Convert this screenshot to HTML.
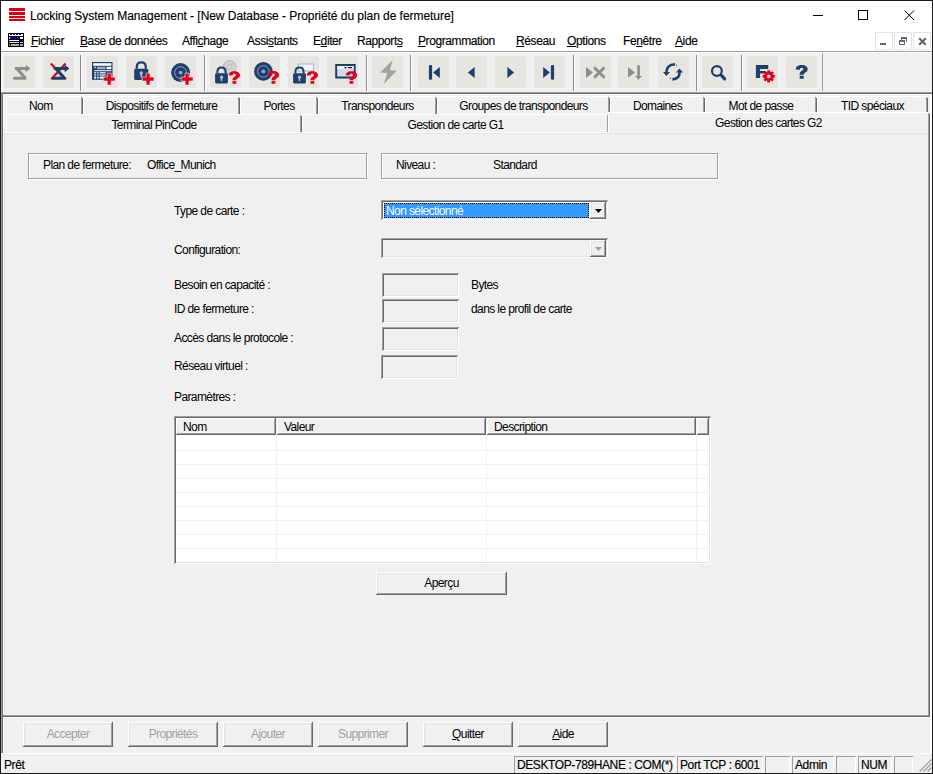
<!DOCTYPE html>
<html><head><meta charset="utf-8">
<style>
*{margin:0;padding:0;box-sizing:border-box}
html,body{width:933px;height:774px;overflow:hidden;background:#f0f0f0}
body{position:relative;font-family:"Liberation Sans",sans-serif;color:#000}
.a{position:absolute}
.t{position:absolute;font-size:12px;line-height:13px;letter-spacing:-0.6px;white-space:pre;color:#000}
.s{position:absolute;font-size:12px;line-height:15px;letter-spacing:-0.4px;white-space:pre;color:#000;-webkit-text-stroke:0.15px #000}
.u{text-decoration:underline;text-underline-offset:1px}
.sunk{box-shadow:inset 1px 1px #a0a0a0,inset -1px -1px #fff,inset 2px 2px #696969,inset -2px -2px #e3e3e3}
.rais{box-shadow:inset -1px -1px #696969,inset 1px 1px #fff,inset -2px -2px #a0a0a0,inset 2px 2px #e3e3e3}
.tb{position:absolute;top:56px;width:31px;height:32px;background:#e6e5e0;border-radius:2px}
.tb svg{position:absolute;left:0;top:0}
.sep{position:absolute;top:55px;width:1px;height:36px;background:#8a8a8a;box-shadow:1px 0 #fff}
.tab{position:absolute;height:18px;border-left:1px solid #fff;border-top:1px solid #fff;box-shadow:inset -1px 0 #a0a0a0;}
.tab:after{content:"";position:absolute;right:-1px;top:0;bottom:0;width:1px;background:#696969}
.etch{position:absolute;border:1px solid #a0a0a0;box-shadow:1px 1px #fff,inset 1px 1px #fff}
.btn{position:absolute;width:90px;height:24px;background:#f0f0f0}
.dis{color:#a0a0a0}
.pane{position:absolute;top:756px;height:17px;border-left:1px solid #a0a0a0;border-top:1px solid #a0a0a0}
</style></head>
<body>
<!-- window frame -->
<div class="a" style="left:0;top:0;width:933px;height:774px;border:1px solid #1a1a1a;"></div>
<!-- title bar -->
<div class="a" style="left:1px;top:1px;width:931px;height:50px;background:#fff"></div>
<div class="a" style="left:9px;top:8px;width:16px;height:3px;background:#e0000f"></div>
<div class="a" style="left:9px;top:12px;width:16px;height:3px;background:#e0000f"></div>
<div class="a" style="left:9px;top:16px;width:16px;height:2px;background:#e0000f"></div>
<div class="a" style="left:9px;top:19px;width:16px;height:2px;background:#e0000f"></div>
<div class="s" style="left:30px;top:9px;letter-spacing:-0.05px">Locking System Management - [New Database - Propriété du plan de fermeture]</div>
<div class="a" style="left:813px;top:15px;width:10px;height:1px;background:#000"></div>
<div class="a" style="left:858px;top:10px;width:10px;height:10px;border:1px solid #000"></div>
<svg class="a" style="left:903px;top:9px" width="13" height="13"><path d="M1.5 1.5L11 11M11 1.5L1.5 11" stroke="#000" stroke-width="1"/></svg>
<!-- menu -->
<svg class="a" style="left:8px;top:33px" width="16" height="14" viewBox="0 0 16 14"><rect width="16" height="14" fill="#000"/><rect x="1" y="1" width="14" height="2" fill="#fff"/><path d="M2 1h2v1h-2zM5 1h2v1h-2zM8 1h2v1h-2zM11 1h2v1h-2z" fill="#0000e0"/><rect x="1.2" y="4" width="1" height="2" fill="#fff"/><rect x="3" y="4" width="8" height="2" fill="#0000b0"/><rect x="12" y="4" width="3" height="2" fill="#fff"/><rect x="1.2" y="7" width="9.8" height="1" fill="#fff"/><rect x="12" y="7" width="3" height="1" fill="#000090"/><rect x="1.2" y="9" width="9.8" height="1" fill="#ddd"/><rect x="12" y="9" width="3" height="1" fill="#ddd"/><rect x="1.2" y="11" width="1" height="2" fill="#aaa"/><rect x="3" y="11" width="8" height="2" fill="#aaa"/><rect x="12" y="11" width="3" height="2" fill="#aaa"/></svg>
<div class="s" style="left:31px;top:34px"><span class="u">F</span>ichier</div>
<div class="s" style="left:80px;top:34px"><span class="u">B</span>ase de données</div>
<div class="s" style="left:182px;top:34px">Affi<span class="u">c</span>hage</div>
<div class="s" style="left:247px;top:34px">Assi<span class="u">s</span>tants</div>
<div class="s" style="left:313px;top:34px">E<span class="u">d</span>iter</div>
<div class="s" style="left:357px;top:34px">Rapport<span class="u">s</span></div>
<div class="s" style="left:418px;top:34px"><span class="u">P</span>rogrammation</div>
<div class="s" style="left:516px;top:34px"><span class="u">R</span>éseau</div>
<div class="s" style="left:567px;top:34px"><span class="u">O</span>ptions</div>
<div class="s" style="left:623px;top:34px">Fe<span class="u">n</span>être</div>
<div class="s" style="left:675px;top:34px"><span class="u">A</span>ide</div>
<div class="a" style="left:875px;top:32px;width:18px;height:18px;border:1px solid #e3e3e3"></div>
<div class="a" style="left:894px;top:32px;width:18px;height:18px;border:1px solid #e3e3e3"></div>
<div class="a" style="left:913px;top:32px;width:18px;height:18px;border:1px solid #e3e3e3"></div>
<div class="a" style="left:880px;top:43px;width:6px;height:2px;background:#5a6570"></div><svg class="a" style="left:899px;top:37px" width="8" height="8" fill="#5d6975"><rect x="2" y="0" width="6" height="2"/><rect x="7" y="2" width="1" height="3"/><rect x="2" y="2" width="1" height="1"/><rect x="0" y="3" width="6" height="2"/><rect x="0" y="5" width="1" height="3"/><rect x="5" y="5" width="1" height="3"/><rect x="0" y="7" width="6" height="1"/></svg><svg class="a" style="left:918px;top:37px" width="9" height="9"><path d="M1.2 1.2L7.8 7.8M7.8 1.2L1.2 7.8" stroke="#5a6570" stroke-width="2"/></svg>
<div class="a" style="left:1px;top:51px;width:931px;height:1px;background:#a0a0a0"></div>
<!-- toolbar -->
<div class="a" style="left:1px;top:52px;width:931px;height:40px;background:#f0f0f0;box-shadow:inset 1px 1px #fff"></div>
<div class="a" style="left:822px;top:53px;width:1px;height:38px;background:#a0a0a0"></div>
<div id="toolbar">
<div class="tb" style="left:4px"><svg width="31" height="32" viewBox="0 0 31 32"><path d="M12 12.4H23 M12.8 12.6L20.8 21.6 M10.4 22.3H21" fill="none" stroke="#8d8d8d" stroke-width="3" stroke-linecap="round" stroke-linejoin="round"/><path d="M21.6 8.8L26.4 12.4L21.6 16.2Z" fill="#8d8d8d"/></svg></div>
<div class="tb" style="left:43px"><svg width="31" height="32" viewBox="0 0 31 32"><path d="M7.8 7.4L23 23.2M22.6 7.4L8.2 23.2" stroke="#e2001a" stroke-width="2.2"/><path d="M12 12.4H23 M12.8 12.6L20.8 21.6 M10.4 22.3H21" fill="none" stroke="#1d3f6b" stroke-width="3" stroke-linecap="round" stroke-linejoin="round"/><path d="M21.6 8.8L26.4 12.4L21.6 16.2Z" fill="#1d3f6b"/></svg></div>
<div class="tb" style="left:87px"><svg width="31" height="32" viewBox="0 0 31 32"><rect x="5" y="6" width="20.5" height="17.8" fill="#1d3f6b"/><rect x="6.2" y="7.2" width="18.2" height="2.6" fill="#fff"/><rect x="7.2" y="10.8" width="1.8" height="1" fill="#fff"/><rect x="10" y="10.8" width="8.6" height="2.4" fill="#a5a9c8"/><rect x="19.6" y="10.8" width="4.8" height="2.4" fill="#fff"/><rect x="7.2" y="14.2" width="17.2" height="1" fill="#fff"/><rect x="7.2" y="16.2" width="2" height="1.2" fill="#fff"/><rect x="10.2" y="16.2" width="1.4" height="1.2" fill="#fff"/><rect x="12.6" y="16.2" width="6" height="1.2" fill="#fff"/><rect x="7.2" y="18.4" width="2" height="1.2" fill="#fff"/><rect x="10.2" y="18.4" width="1.4" height="1.2" fill="#fff"/><rect x="12.6" y="18.4" width="6" height="1.2" fill="#fff"/><rect x="7.2" y="20.6" width="2" height="2" fill="#fff"/><rect x="10.2" y="20.6" width="1.4" height="2" fill="#fff"/><rect x="12.6" y="20.6" width="5" height="2" fill="#fff"/><path d="M20.2 17.1h4v4.0h4.0v4h-4.0v4.0h-4v-4.0h-4.0v-4h4.0z" fill="#e2001a" stroke="#fff" stroke-width="0.6" stroke-linejoin="round"/></svg></div>
<div class="tb" style="left:126px"><svg width="31" height="32" viewBox="0 0 31 32"><g transform="translate(8.2,5.2) scale(1.07)"><path d="M2.4 7V5.4C2.4 2.6 4.3 1.1 6.6 1.1C8.9 1.1 10.8 2.6 10.8 5.4V7" fill="none" stroke="#1d3f6b" stroke-width="2.1"/><rect x="0" y="7" width="13.2" height="10.5" rx="1.2" fill="#1d3f6b"/><circle cx="6.6" cy="11" r="1.7" fill="#b7b4cc"/><rect x="5.8" y="11.5" width="1.6" height="3.5" fill="#b7b4cc"/></g><path d="M20.1 17.1h4v4.0h4.0v4h-4.0v4.0h-4v-4.0h-4.0v-4h4.0z" fill="#e2001a" stroke="#fff" stroke-width="0.6" stroke-linejoin="round"/></svg></div>
<div class="tb" style="left:165px"><svg width="31" height="32" viewBox="0 0 31 32"><circle cx="15.6" cy="16.6" r="9.5" fill="#1d3f6b"/><circle cx="15.6" cy="16.6" r="5.89" fill="none" stroke="#8ea3c4" stroke-width="1"/><circle cx="15.6" cy="16.6" r="1.90" fill="#9aa6c8"/><path d="M20.1 17.1h4v4.0h4.0v4h-4.0v4.0h-4v-4.0h-4.0v-4h4.0z" fill="#e2001a" stroke="#fff" stroke-width="0.6" stroke-linejoin="round"/></svg></div>
<div class="tb" style="left:210px"><svg width="31" height="32" viewBox="0 0 31 32"><circle cx="19.6" cy="11" r="7.2" fill="#c6c6c6"/><circle cx="19.6" cy="11" r="4.4" fill="none" stroke="#e4e4e4" stroke-width="1"/><circle cx="19.6" cy="11" r="1.4" fill="#e0e0e0"/><g transform="translate(5.1,10.5) scale(0.97)"><path d="M2.4 7V5.4C2.4 2.6 4.3 1.1 6.6 1.1C8.9 1.1 10.8 2.6 10.8 5.4V7" fill="none" stroke="#1d3f6b" stroke-width="2.1"/><rect x="0" y="7" width="13.2" height="10.5" rx="1.2" fill="#1d3f6b"/><circle cx="6.6" cy="11" r="1.7" fill="#b7b4cc"/><rect x="5.8" y="11.5" width="1.6" height="3.5" fill="#b7b4cc"/></g><g transform="translate(18.2,15.2) scale(0.938,0.900)" fill="#e2001a"><path d="M0.6 4.6C0.6 1.6 3.2 0 6.6 0C10.3 0 12.6 1.9 12.6 4.4C12.6 7.3 9 7.8 8.6 9.6L8.6 10H4.6V9.3C4.6 6.3 8.2 5.8 8.2 4.4C8.2 3.5 7.5 2.9 6.5 2.9C5.4 2.9 4.8 3.6 4.8 4.9Z"/><rect x="4.6" y="11" width="4" height="3"/></g></svg></div>
<div class="tb" style="left:249px"><svg width="31" height="32" viewBox="0 0 31 32"><circle cx="14.4" cy="15.4" r="9.3" fill="#1d3f6b"/><circle cx="14.4" cy="15.4" r="5.77" fill="none" stroke="#8ea3c4" stroke-width="1"/><circle cx="14.4" cy="15.4" r="1.86" fill="#9aa6c8"/><g transform="translate(18.2,15.0) scale(0.946,0.914)" fill="#e2001a"><path d="M0.6 4.6C0.6 1.6 3.2 0 6.6 0C10.3 0 12.6 1.9 12.6 4.4C12.6 7.3 9 7.8 8.6 9.6L8.6 10H4.6V9.3C4.6 6.3 8.2 5.8 8.2 4.4C8.2 3.5 7.5 2.9 6.5 2.9C5.4 2.9 4.8 3.6 4.8 4.9Z"/><rect x="4.6" y="11" width="4" height="3"/></g></svg></div>
<div class="tb" style="left:288px"><svg width="31" height="32" viewBox="0 0 31 32"><rect x="10.2" y="8" width="15.4" height="7" fill="#f4f4f8" stroke="#9aa6c8" stroke-width="0.8"/><g transform="translate(5.1,10.5) scale(0.97)"><path d="M2.4 7V5.4C2.4 2.6 4.3 1.1 6.6 1.1C8.9 1.1 10.8 2.6 10.8 5.4V7" fill="none" stroke="#1d3f6b" stroke-width="2.1"/><rect x="0" y="7" width="13.2" height="10.5" rx="1.2" fill="#1d3f6b"/><circle cx="6.6" cy="11" r="1.7" fill="#b7b4cc"/><rect x="5.8" y="11.5" width="1.6" height="3.5" fill="#b7b4cc"/></g><g transform="translate(18.2,15.2) scale(0.938,0.900)" fill="#e2001a"><path d="M0.6 4.6C0.6 1.6 3.2 0 6.6 0C10.3 0 12.6 1.9 12.6 4.4C12.6 7.3 9 7.8 8.6 9.6L8.6 10H4.6V9.3C4.6 6.3 8.2 5.8 8.2 4.4C8.2 3.5 7.5 2.9 6.5 2.9C5.4 2.9 4.8 3.6 4.8 4.9Z"/><rect x="4.6" y="11" width="4" height="3"/></g></svg></div>
<div class="tb" style="left:327px"><svg width="31" height="32" viewBox="0 0 31 32"><rect x="9.2" y="9" width="18.5" height="12.5" fill="#d6dbe8" stroke="#1d3f6b" stroke-width="2"/><rect x="10.2" y="10" width="16.5" height="3" fill="#f4f5fa"/><rect x="17.5" y="11" width="2" height="1.2" fill="#000"/><rect x="21" y="11" width="4" height="1.2" fill="#000"/><g transform="translate(18.2,15.2) scale(0.946,0.900)" fill="#e2001a"><path d="M0.6 4.6C0.6 1.6 3.2 0 6.6 0C10.3 0 12.6 1.9 12.6 4.4C12.6 7.3 9 7.8 8.6 9.6L8.6 10H4.6V9.3C4.6 6.3 8.2 5.8 8.2 4.4C8.2 3.5 7.5 2.9 6.5 2.9C5.4 2.9 4.8 3.6 4.8 4.9Z"/><rect x="4.6" y="11" width="4" height="3"/></g></svg></div>
<div class="tb" style="left:372px"><svg width="31" height="32" viewBox="0 0 31 32"><path d="M20.7 4L8.2 16.6L15.2 17L11.9 27.8L24.9 14.7L17.9 14.3Z" fill="#a2a2a2"/></svg></div>
<div class="tb" style="left:418px"><svg width="31" height="32" viewBox="0 0 31 32"><rect x="10.9" y="8.9" width="3.2" height="14.9" rx="1.2" fill="#1d3f6b"/><path d="M15.1 16.4L21.8 11V21.9Z" fill="#1d3f6b"/></svg></div>
<div class="tb" style="left:456px"><svg width="31" height="32" viewBox="0 0 31 32"><path d="M11.9 16.4L18.6 11V22Z" fill="#1d3f6b"/></svg></div>
<div class="tb" style="left:495px"><svg width="31" height="32" viewBox="0 0 31 32"><path d="M19.1 16.4L12.4 11V22Z" fill="#1d3f6b"/></svg></div>
<div class="tb" style="left:534px"><svg width="31" height="32" viewBox="0 0 31 32"><rect x="16.9" y="8.9" width="3.2" height="14.9" rx="1.2" fill="#1d3f6b"/><path d="M15.9 16.4L9.2 11V21.9Z" fill="#1d3f6b"/></svg></div>
<div class="tb" style="left:580px"><svg width="31" height="32" viewBox="0 0 31 32"><path d="M6 11V22L13 16.6Z" fill="#8d8d8d"/><path d="M15 12.2L23.6 20.8M23.6 12.2L15 20.8" stroke="#8d8d8d" stroke-width="3" stroke-linecap="round"/></svg></div>
<div class="tb" style="left:618px"><svg width="31" height="32" viewBox="0 0 31 32"><path d="M10 11V21.7L17 16.4Z" fill="#8d8d8d"/><rect x="19.3" y="9.2" width="2.6" height="11.5" fill="#8d8d8d"/><path d="M17 19.9H24L20.5 23.8Z" fill="#8d8d8d"/></svg></div>
<div class="tb" style="left:658px"><svg width="31" height="32" viewBox="0 0 31 32"><path d="M17 8.2C12 8.4 8.6 11 8.4 16" fill="none" stroke="#1d3f6b" stroke-width="2.6"/><path d="M5 16H12L8.4 20Z" fill="#1d3f6b"/><path d="M14.4 23.4C19 23.2 21.6 20.6 21.6 16" fill="none" stroke="#1d3f6b" stroke-width="2.6"/><path d="M18 16.6H25.2L21.4 12.6Z" fill="#1d3f6b"/><circle cx="18.6" cy="9.2" r="0.6" fill="#1d3f6b"/><circle cx="12.4" cy="22.2" r="0.6" fill="#1d3f6b"/></svg></div>
<div class="tb" style="left:702px"><svg width="31" height="32" viewBox="0 0 31 32"><circle cx="14.9" cy="15" r="4.9" fill="none" stroke="#1d3f6b" stroke-width="2.2"/><path d="M19.6 19.6L22.6 22.8" stroke="#1d3f6b" stroke-width="3.2" stroke-linecap="round"/></svg></div>
<div class="tb" style="left:747px"><svg width="31" height="32" viewBox="0 0 31 32"><path d="M8.9 8.9H21.2V12.9H13.1V14.9H18.6V17.6H13.1V22H8.9Z" fill="#1d3f6b"/><path d="M27.78 19.07 L27.78 21.53 L25.79 21.93 L25.74 22.04 L26.87 23.73 L25.13 25.47 L23.44 24.34 L23.33 24.39 L22.93 26.38 L20.47 26.38 L20.07 24.39 L19.96 24.34 L18.27 25.47 L16.53 23.73 L17.66 22.04 L17.61 21.93 L15.62 21.53 L15.62 19.07 L17.61 18.67 L17.66 18.56 L16.53 16.87 L18.27 15.13 L19.96 16.26 L20.07 16.21 L20.47 14.22 L22.93 14.22 L23.33 16.21 L23.44 16.26 L25.13 15.13 L26.87 16.87 L25.74 18.56 L25.79 18.67Z M23.599999999999998 20.3A1.9 1.9 0 1 0 19.8 20.3A1.9 1.9 0 1 0 23.599999999999998 20.3Z" fill="#e2001a" fill-rule="evenodd"/></svg></div>
<div class="tb" style="left:786px"><svg width="31" height="32" viewBox="0 0 31 32"><g transform="translate(9.1,8.9) scale(1.000,0.986)" fill="#1d3f6b"><path d="M0.6 4.6C0.6 1.6 3.2 0 6.6 0C10.3 0 12.6 1.9 12.6 4.4C12.6 7.3 9 7.8 8.6 9.6L8.6 10H4.6V9.3C4.6 6.3 8.2 5.8 8.2 4.4C8.2 3.5 7.5 2.9 6.5 2.9C5.4 2.9 4.8 3.6 4.8 4.9Z"/><rect x="4.6" y="11" width="4" height="3"/></g></svg></div>
<div class="sep" style="left:80px"></div>
<div class="sep" style="left:204px"></div>
<div class="sep" style="left:366px"></div>
<div class="sep" style="left:410px"></div>
<div class="sep" style="left:573px"></div>
<div class="sep" style="left:696px"></div>
<div class="sep" style="left:741px"></div>
</div>
<!-- client edge -->
<div class="a" style="left:1px;top:92px;width:931px;height:661px;box-shadow:inset 1px 1px #a0a0a0,inset 2px 2px #696969"></div>
<div class="a" style="left:3px;top:94px;width:929px;height:1px;background:#fff"></div>
<div class="a" style="left:3px;top:94px;width:1px;height:658px;background:#fff"></div>
<!-- tab page -->
<div class="a" style="left:3px;top:132px;width:927px;height:585px;border-top:1px solid #fff;box-shadow:inset -1px -1px #696969,inset -2px -2px #a0a0a0,inset 1px 0 #fff,inset 2px 1px #e3e3e3;"></div>
<div class="a" style="left:3px;top:717px;width:927px;height:1px;background:#fff"></div>
<div class="a" style="left:930px;top:94px;width:2px;height:659px;background:#fff"></div>
<div id="tabs">
<div class="a" style="left:6px;top:97px;width:1px;height:17px;background:#fff"></div>
<div class="a" style="left:7px;top:96px;width:74px;height:1px;background:#fff"></div>
<div class="a" style="left:81px;top:97px;width:1px;height:17px;background:#a0a0a0"></div>
<div class="a" style="left:82px;top:98px;width:1px;height:16px;background:#696969"></div>
<div class="t" style="left:29px;top:100px">Nom</div>
<div class="a" style="left:83px;top:97px;width:1px;height:17px;background:#fff"></div>
<div class="a" style="left:84px;top:96px;width:154px;height:1px;background:#fff"></div>
<div class="a" style="left:238px;top:97px;width:1px;height:17px;background:#a0a0a0"></div>
<div class="a" style="left:239px;top:98px;width:1px;height:16px;background:#696969"></div>
<div class="t" style="left:83px;top:100px;width:157px;text-align:center">Dispositifs de fermeture</div>
<div class="a" style="left:240px;top:97px;width:1px;height:17px;background:#fff"></div>
<div class="a" style="left:241px;top:96px;width:75px;height:1px;background:#fff"></div>
<div class="a" style="left:316px;top:97px;width:1px;height:17px;background:#a0a0a0"></div>
<div class="a" style="left:317px;top:98px;width:1px;height:16px;background:#696969"></div>
<div class="t" style="left:240px;top:100px;width:78px;text-align:center">Portes</div>
<div class="a" style="left:318px;top:97px;width:1px;height:17px;background:#fff"></div>
<div class="a" style="left:319px;top:96px;width:116px;height:1px;background:#fff"></div>
<div class="a" style="left:435px;top:97px;width:1px;height:17px;background:#a0a0a0"></div>
<div class="a" style="left:436px;top:98px;width:1px;height:16px;background:#696969"></div>
<div class="t" style="left:318px;top:100px;width:119px;text-align:center">Transpondeurs</div>
<div class="a" style="left:437px;top:97px;width:1px;height:17px;background:#fff"></div>
<div class="a" style="left:438px;top:96px;width:170px;height:1px;background:#fff"></div>
<div class="a" style="left:608px;top:97px;width:1px;height:17px;background:#a0a0a0"></div>
<div class="a" style="left:609px;top:98px;width:1px;height:16px;background:#696969"></div>
<div class="t" style="left:437px;top:100px;width:173px;text-align:center">Groupes de transpondeurs</div>
<div class="a" style="left:610px;top:97px;width:1px;height:17px;background:#fff"></div>
<div class="a" style="left:611px;top:96px;width:92px;height:1px;background:#fff"></div>
<div class="a" style="left:703px;top:97px;width:1px;height:17px;background:#a0a0a0"></div>
<div class="a" style="left:704px;top:98px;width:1px;height:16px;background:#696969"></div>
<div class="t" style="left:610px;top:100px;width:95px;text-align:center">Domaines</div>
<div class="a" style="left:705px;top:97px;width:1px;height:17px;background:#fff"></div>
<div class="a" style="left:706px;top:96px;width:109px;height:1px;background:#fff"></div>
<div class="a" style="left:815px;top:97px;width:1px;height:17px;background:#a0a0a0"></div>
<div class="a" style="left:816px;top:98px;width:1px;height:16px;background:#696969"></div>
<div class="t" style="left:705px;top:100px;width:112px;text-align:center">Mot de passe</div>
<div class="a" style="left:817px;top:97px;width:1px;height:17px;background:#fff"></div>
<div class="a" style="left:818px;top:96px;width:108px;height:1px;background:#fff"></div>
<div class="a" style="left:926px;top:97px;width:1px;height:17px;background:#a0a0a0"></div>
<div class="a" style="left:927px;top:98px;width:1px;height:16px;background:#696969"></div>
<div class="t" style="left:817px;top:100px;width:111px;text-align:center">TID spéciaux</div>
<div class="a" style="left:6px;top:115px;width:1px;height:17px;background:#fff"></div>
<div class="a" style="left:7px;top:114px;width:293px;height:1px;background:#fff"></div>
<div class="a" style="left:300px;top:115px;width:1px;height:17px;background:#a0a0a0"></div>
<div class="a" style="left:301px;top:116px;width:1px;height:16px;background:#696969"></div>
<div class="t" style="left:6px;top:119px;width:296px;text-align:center">Terminal PinCode</div>
<div class="a" style="left:302px;top:115px;width:1px;height:17px;background:#fff"></div>
<div class="a" style="left:303px;top:114px;width:304px;height:1px;background:#fff"></div>
<div class="a" style="left:607px;top:115px;width:1px;height:17px;background:#a0a0a0"></div>
<div class="a" style="left:608px;top:116px;width:1px;height:16px;background:#696969"></div>
<div class="t" style="left:302px;top:119px;width:307px;text-align:center">Gestion de carte G1</div>
<div class="a" style="left:608px;top:112px;width:322px;height:21px;background:#f0f0f0"></div>
<div class="a" style="left:608px;top:113px;width:1px;height:20px;background:#fff"></div>
<div class="a" style="left:609px;top:112px;width:318px;height:1px;background:#fff"></div>
<div class="a" style="left:928px;top:113px;width:1px;height:20px;background:#a0a0a0"></div>
<div class="a" style="left:929px;top:114px;width:1px;height:20px;background:#696969"></div>
<div class="t" style="left:607px;top:117px;width:323px;text-align:center">Gestion des cartes G2</div>
</div>
<div id="content">
<div class="etch" style="left:28px;top:153px;width:339px;height:26px"></div>
<div class="t" style="left:43px;top:159px">Plan de fermeture:</div>
<div class="t" style="left:147px;top:159px">Office_Munich</div>
<div class="etch" style="left:381px;top:153px;width:337px;height:26px"></div>
<div class="t" style="left:396px;top:159px">Niveau :</div>
<div class="t" style="left:493px;top:159px">Standard</div>
<div class="t" style="left:174px;top:205px">Type de carte :</div>
<div class="t" style="left:174px;top:244px">Configuration:</div>
<div class="t" style="left:174px;top:279px">Besoin en capacité :</div>
<div class="t" style="left:174px;top:303px">ID de fermeture :</div>
<div class="t" style="left:174px;top:332px">Accès dans le protocole :</div>
<div class="t" style="left:174px;top:360px">Réseau virtuel :</div>
<div class="t" style="left:174px;top:391px">Paramètres :</div>
<div class="t" style="left:471px;top:279px">Bytes</div>
<div class="t" style="left:471px;top:303px">dans le profil de carte</div>
<div class="a sunk" style="left:381px;top:200px;width:227px;height:20px;background:#fff"></div>
<div class="a" style="left:384px;top:203px;width:205px;height:15px;background:#3399ff;outline:1px dotted #000;outline-offset:-1px"></div>
<div class="t" style="left:386px;top:205px;color:#fff">Non sélectionné</div>
<div class="a rais" style="left:590px;top:202px;width:16px;height:17px;background:#f0f0f0"></div>
<svg class="a" style="left:594px;top:208px" width="9" height="6"><path d="M1 1H8L4.5 5Z" fill="#000"/></svg>
<div class="a sunk" style="left:381px;top:238px;width:227px;height:20px;background:#f0f0f0"></div>
<div class="a rais" style="left:590px;top:240px;width:16px;height:17px;background:#f0f0f0"></div>
<svg class="a" style="left:594px;top:246px" width="9" height="6"><path d="M1 1H8L4.5 5Z" fill="#a0a0a0"/></svg>
<div class="a sunk" style="left:382px;top:273px;width:77px;height:24px;background:#f0f0f0"></div>
<div class="a sunk" style="left:382px;top:299px;width:77px;height:24px;background:#f0f0f0"></div>
<div class="a sunk" style="left:382px;top:327px;width:77px;height:24px;background:#f0f0f0"></div>
<div class="a sunk" style="left:381px;top:355px;width:77px;height:24px;background:#f0f0f0"></div>
<div class="a sunk" style="left:174px;top:416px;width:537px;height:148px;background:#fff"></div>
<div class="a" style="left:176px;top:450px;width:533px;height:1px;background:#f0f0f0"></div>
<div class="a" style="left:176px;top:464px;width:533px;height:1px;background:#f0f0f0"></div>
<div class="a" style="left:176px;top:478px;width:533px;height:1px;background:#f0f0f0"></div>
<div class="a" style="left:176px;top:492px;width:533px;height:1px;background:#f0f0f0"></div>
<div class="a" style="left:176px;top:506px;width:533px;height:1px;background:#f0f0f0"></div>
<div class="a" style="left:176px;top:520px;width:533px;height:1px;background:#f0f0f0"></div>
<div class="a" style="left:176px;top:534px;width:533px;height:1px;background:#f0f0f0"></div>
<div class="a" style="left:176px;top:548px;width:533px;height:1px;background:#f0f0f0"></div>
<div class="a" style="left:276px;top:435px;width:1px;height:127px;background:#f0f0f0"></div>
<div class="a" style="left:486px;top:435px;width:1px;height:127px;background:#f0f0f0"></div>
<div class="a" style="left:696px;top:435px;width:1px;height:127px;background:#f0f0f0"></div>
<div class="a" style="left:176px;top:418px;width:533px;height:17px;background:#f0f0f0"></div>
<div class="a rais" style="left:176px;top:418px;width:100px;height:17px;background:#f0f0f0;box-shadow:inset -1px -1px #696969,inset 1px 1px #fff,inset -2px -2px #a0a0a0"></div>
<div class="t" style="left:183px;top:421px">Nom</div>
<div class="a rais" style="left:277px;top:418px;width:209px;height:17px;background:#f0f0f0;box-shadow:inset -1px -1px #696969,inset 1px 1px #fff,inset -2px -2px #a0a0a0"></div>
<div class="t" style="left:284px;top:421px">Valeur</div>
<div class="a rais" style="left:487px;top:418px;width:209px;height:17px;background:#f0f0f0;box-shadow:inset -1px -1px #696969,inset 1px 1px #fff,inset -2px -2px #a0a0a0"></div>
<div class="t" style="left:494px;top:421px">Description</div>
<div class="a rais" style="left:697px;top:418px;width:12px;height:17px;background:#f0f0f0;box-shadow:inset -1px -1px #696969,inset 1px 1px #fff,inset -2px -2px #a0a0a0"></div>
<div class="a rais" style="left:376px;top:572px;width:131px;height:23px;background:#f0f0f0"></div>
<div class="t" style="left:376px;top:577px;width:131px;text-align:center">Aperçu</div>
<div class="a rais" style="left:23px;top:722px;width:90px;height:25px;background:#f0f0f0"></div>
<div class="t" style="left:23px;top:728px;width:90px;text-align:center;color:#a0a0a0">Accepter</div>
<div class="a rais" style="left:128px;top:722px;width:90px;height:25px;background:#f0f0f0"></div>
<div class="t" style="left:128px;top:728px;width:90px;text-align:center;color:#a0a0a0">Propriétés</div>
<div class="a rais" style="left:223px;top:722px;width:90px;height:25px;background:#f0f0f0"></div>
<div class="t" style="left:223px;top:728px;width:90px;text-align:center;color:#a0a0a0">Ajouter</div>
<div class="a rais" style="left:318px;top:722px;width:90px;height:25px;background:#f0f0f0"></div>
<div class="t" style="left:318px;top:728px;width:90px;text-align:center;color:#a0a0a0">Supprimer</div>
<div class="a rais" style="left:423px;top:722px;width:90px;height:25px;background:#f0f0f0"></div>
<div class="t" style="left:423px;top:728px;width:90px;text-align:center"><span class="u">Q</span>uitter</div>
<div class="a rais" style="left:518px;top:722px;width:90px;height:25px;background:#f0f0f0"></div>
<div class="t" style="left:518px;top:728px;width:90px;text-align:center"><span class="u">A</span>ide</div>
</div>
<div id="status">
<div class="a" style="left:1px;top:753px;width:931px;height:20px;background:#f0f0f0;border-top:1px solid #fff"></div>
<div class="s" style="left:4px;top:758px">Prêt</div>
<div class="pane" style="left:514px;width:161px;box-shadow:inset -1px 0 #fff"></div>
<div class="s" style="left:517px;top:758px">DESKTOP-789HANE : COM(*)</div>
<div class="pane" style="left:677px;width:86px;box-shadow:inset -1px 0 #fff"></div>
<div class="s" style="left:680px;top:758px">Port TCP : 6001</div>
<div class="pane" style="left:765px;width:25px;box-shadow:inset -1px 0 #fff"></div>
<div class="pane" style="left:792px;width:42px;box-shadow:inset -1px 0 #fff"></div>
<div class="s" style="left:795px;top:758px">Admin</div>
<div class="pane" style="left:836px;width:20px;box-shadow:inset -1px 0 #fff"></div>
<div class="pane" style="left:858px;width:34px;box-shadow:inset -1px 0 #fff"></div>
<div class="s" style="left:861px;top:758px">NUM</div>
<div class="pane" style="left:894px;width:19px;box-shadow:inset -1px 0 #fff"></div>
<svg class="a" style="left:918px;top:758px" width="14" height="15"><path d="M13.5 1.5L1.5 13.5M13.5 5.5L5.5 13.5M13.5 9.5L9.5 13.5" stroke="#a0a0a0" stroke-width="1.3"/></svg>
</div>
</body></html>
